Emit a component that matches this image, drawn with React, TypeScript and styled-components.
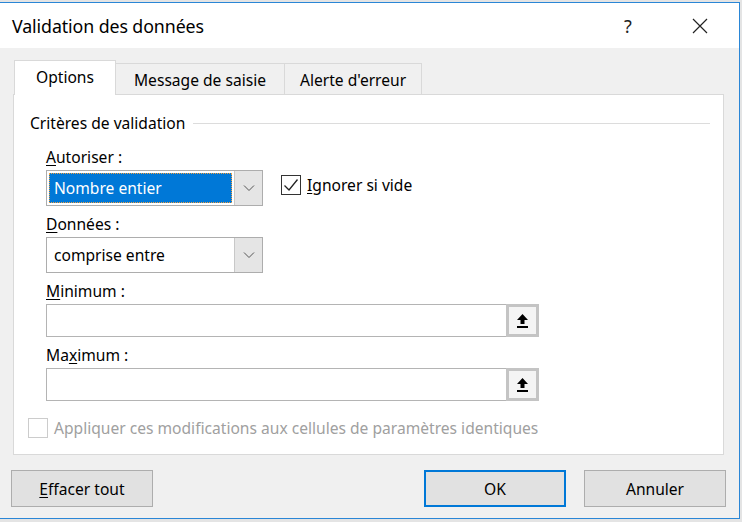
import React from "react"
import styled, { createGlobalStyle } from "styled-components"

const GlobalStyle = createGlobalStyle`
  html, body {
    margin: 0;
    padding: 0;
    background: #e4e4e4;
    font-family: "Noto Sans", "Open Sans", sans-serif;
    color: #000;
  }
`

const Screen = styled.div`
  width: 742px;
  height: 522px;
  overflow: hidden;
  padding-top: 2px;
  box-sizing: border-box;
  background: #e4e4e4;
`

const Dialog = styled.div`
  width: 740px;
  height: 517px;
  box-sizing: border-box;
  border: 1px solid #2a86d6;
  border-left: none;
  display: flex;
  flex-direction: column;
  background: #f0f0f0;
`

const TitleBar = styled.div`
  height: 45px;
  background: #fff;
  display: flex;
  align-items: center;
  padding-left: 12px;
  flex-shrink: 0;
`

const Title = styled.div`
  flex: 1;
  font-size: 17.8px;
  letter-spacing: -0.1px;
`

const TitleButton = styled.div<{ $gap?: number }>`
  width: 46px;
  height: 45px;
  margin-right: ${(p) => p.$gap ?? 0}px;
  display: flex;
  align-items: center;
  justify-content: center;
  font-size: 18px;
  color: #222;
`

const Body = styled.div`
  flex: 1;
  padding: 12px 15px 0 13px;
  display: flex;
  flex-direction: column;
`

const TabRow = styled.div`
  display: flex;
  align-items: flex-end;
  height: 34px;
  padding-left: 1px;
`

const Tab = styled.div<{ $active?: boolean; $pad: number }>`
  height: ${(p) => (p.$active ? 35 : 31)}px;
  margin-bottom: ${(p) => (p.$active ? -1 : 0)}px;
  padding: ${(p) => (p.$active ? 0 : 2)}px ${(p) => p.$pad}px
    ${(p) => (p.$active ? 3 : 0)}px;
  box-sizing: border-box;
  display: flex;
  align-items: center;
  justify-content: center;
  font-size: 15.6px;
  border: 1px solid #d9d9d9;
  border-bottom: none;
  border-left: ${(p) => (p.$active ? "1px solid #d9d9d9" : "none")};
  background: ${(p) => (p.$active ? "#fff" : "#f0f0f0")};
  position: relative;
  z-index: ${(p) => (p.$active ? 1 : 0)};
`

const Panel = styled.div`
  height: 361px;
  box-sizing: border-box;
  border: 1px solid #d9d9d9;
  background: #fff;
  padding: 18px 13px 0 16px;
  display: flex;
  flex-direction: column;
`

const GroupHeader = styled.div`
  display: flex;
  align-items: center;
  gap: 8px;
  font-size: 15.6px;
  line-height: 20px;
`

const GroupLine = styled.div`
  flex: 1;
  height: 1px;
  background: #dcdcdc;
`

const Fields = styled.div`
  padding-left: 16px;
  display: flex;
  flex-direction: column;
`

const Label = styled.div<{ $top: number }>`
  font-size: 15.6px;
  line-height: 20px;
  margin-top: ${(p) => p.$top}px;
  margin-bottom: 3px;
`

const Row = styled.div`
  display: flex;
  align-items: flex-start;
  gap: 18px;
`

const Select = styled.div`
  width: 217px;
  height: 36px;
  box-sizing: border-box;
  border: 1px solid #adadad;
  display: flex;
  background: #fff;
`

const SelectValue = styled.div<{ $selected?: boolean }>`
  flex: 1;
  margin: ${(p) => (p.$selected ? "2px" : "0")};
  padding-left: ${(p) => (p.$selected ? 5 : 7)}px;
  display: flex;
  align-items: center;
  font-size: 15.6px;
  background: ${(p) => (p.$selected ? "#0078d7" : "transparent")};
  color: ${(p) => (p.$selected ? "#fff" : "#000")};
  outline: ${(p) => (p.$selected ? "1px dotted #f0a040" : "none")};
  outline-offset: -1px;
`

const SelectArrow = styled.div`
  width: 27px;
  background: #e5e5e5;
  border-left: 1px solid #c8c8c8;
  display: flex;
  align-items: center;
  justify-content: center;
`

const CheckRow = styled.label<{ $disabled?: boolean; $top?: number }>`
  display: flex;
  align-items: center;
  gap: 6px;
  margin-top: ${(p) => p.$top ?? 0}px;
  font-size: 15.6px;
  color: ${(p) => (p.$disabled ? "#a0a0a0" : "#000")};
`

const Box = styled.span<{ $disabled?: boolean }>`
  width: 20px;
  height: 20px;
  flex-shrink: 0;
  box-sizing: border-box;
  border: 1px solid ${(p) => (p.$disabled ? "#cccccc" : "#333")};
  background: #fff;
  display: flex;
  align-items: center;
  justify-content: center;
`

const RefInput = styled.div`
  width: 493px;
  height: 33px;
  box-sizing: border-box;
  border: 1px solid #b4b4b4;
  display: flex;
  justify-content: flex-end;
  background: #fff;
`

const RefButton = styled.div`
  width: 33px;
  margin: -1px -1px -1px 0;
  box-sizing: border-box;
  border: 3px solid #c4c4c4;
  background: #f4f4f4;
  display: flex;
  align-items: center;
  justify-content: center;
`

const ApplyRow = styled.div`
  margin-top: 16px;
  margin-left: -2px;
`

const Footer = styled.div`
  display: flex;
  align-items: center;
  padding: 15px 0 0 0;
  margin-left: -2px;
  margin-right: -2px;
`

const Button = styled.div<{ $default?: boolean; $gap?: number }>`
  width: 142px;
  height: 37px;
  margin-left: ${(p) => p.$gap ?? 0}px;
  box-sizing: border-box;
  border: ${(p) => (p.$default ? "2px solid #0078d7" : "1px solid #adadad")};
  background: #e1e1e1;
  display: flex;
  align-items: center;
  justify-content: center;
  font-size: 15.6px;
`

const Spacer = styled.div`
  flex: 1;
`

const Key = styled.span`
  text-decoration: underline;
  text-underline-offset: 2px;
`

const Chevron = () => (
  <svg width="12" height="8" viewBox="0 0 12 8">
    <path d="M1 1.5 L6 6.5 L11 1.5" fill="none" stroke="#555" strokeWidth="1" />
  </svg>
)

const Check = () => (
  <svg width="16" height="14" viewBox="0 0 16 14">
    <path d="M1.5 7.5 L6 12 L14.5 1.5" fill="none" stroke="#222" strokeWidth="1.3" />
  </svg>
)

const Collapse = () => (
  <svg width="13" height="16" viewBox="0 0 13 16">
    <path d="M6.5 1 L12 7 L8.5 7 L8.5 11 L4.5 11 L4.5 7 L1 7 Z" fill="#000" />
    <rect x="1" y="13" width="11" height="2" fill="#000" />
  </svg>
)

const CloseIcon = () => (
  <svg width="16" height="16" viewBox="0 0 16 16">
    <path d="M1 1 L15 15 M15 1 L1 15" stroke="#222" strokeWidth="1.2" />
  </svg>
)

export default function App() {
  return (
    <>
      <GlobalStyle />
      <Screen>
        <Dialog>
          <TitleBar>
            <Title>Validation des données</Title>
            <TitleButton $gap={26}>?</TitleButton>
            <TitleButton $gap={16}>
              <CloseIcon />
            </TitleButton>
          </TitleBar>
          <Body>
            <TabRow>
              <Tab $active $pad={21}>
                Options
              </Tab>
              <Tab $pad={18}>Message de saisie</Tab>
              <Tab $pad={15}>Alerte d'erreur</Tab>
            </TabRow>
            <Panel>
              <GroupHeader>
                Critères de validation
                <GroupLine />
              </GroupHeader>
              <Fields>
                <Label $top={14}>
                  <Key>A</Key>utoriser :
                </Label>
                <Row>
                  <Select>
                    <SelectValue $selected>Nombre entier</SelectValue>
                    <SelectArrow>
                      <Chevron />
                    </SelectArrow>
                  </Select>
                  <CheckRow $top={4}>
                    <Box>
                      <Check />
                    </Box>
                    <span>
                      <Key>I</Key>gnorer si vide
                    </span>
                  </CheckRow>
                </Row>
                <Label $top={8}>
                  <Key>D</Key>onnées :
                </Label>
                <Select>
                  <SelectValue>comprise entre</SelectValue>
                  <SelectArrow>
                    <Chevron />
                  </SelectArrow>
                </Select>
                <Label $top={8}>
                  <Key>M</Key>inimum :
                </Label>
                <RefInput>
                  <RefButton>
                    <Collapse />
                  </RefButton>
                </RefInput>
                <Label $top={8}>
                  Ma<Key>x</Key>imum :
                </Label>
                <RefInput>
                  <RefButton>
                    <Collapse />
                  </RefButton>
                </RefInput>
              </Fields>
              <ApplyRow>
                <CheckRow $disabled>
                  <Box $disabled />
                  Appliquer ces modifications aux cellules de paramètres identiques
                </CheckRow>
              </ApplyRow>
            </Panel>
            <Footer>
              <Button>
                <span>
                  <Key>E</Key>ffacer tout
                </span>
              </Button>
              <Spacer />
              <Button $default>OK</Button>
              <Button $gap={18}>Annuler</Button>
            </Footer>
          </Body>
        </Dialog>
      </Screen>
    </>
  )
}
